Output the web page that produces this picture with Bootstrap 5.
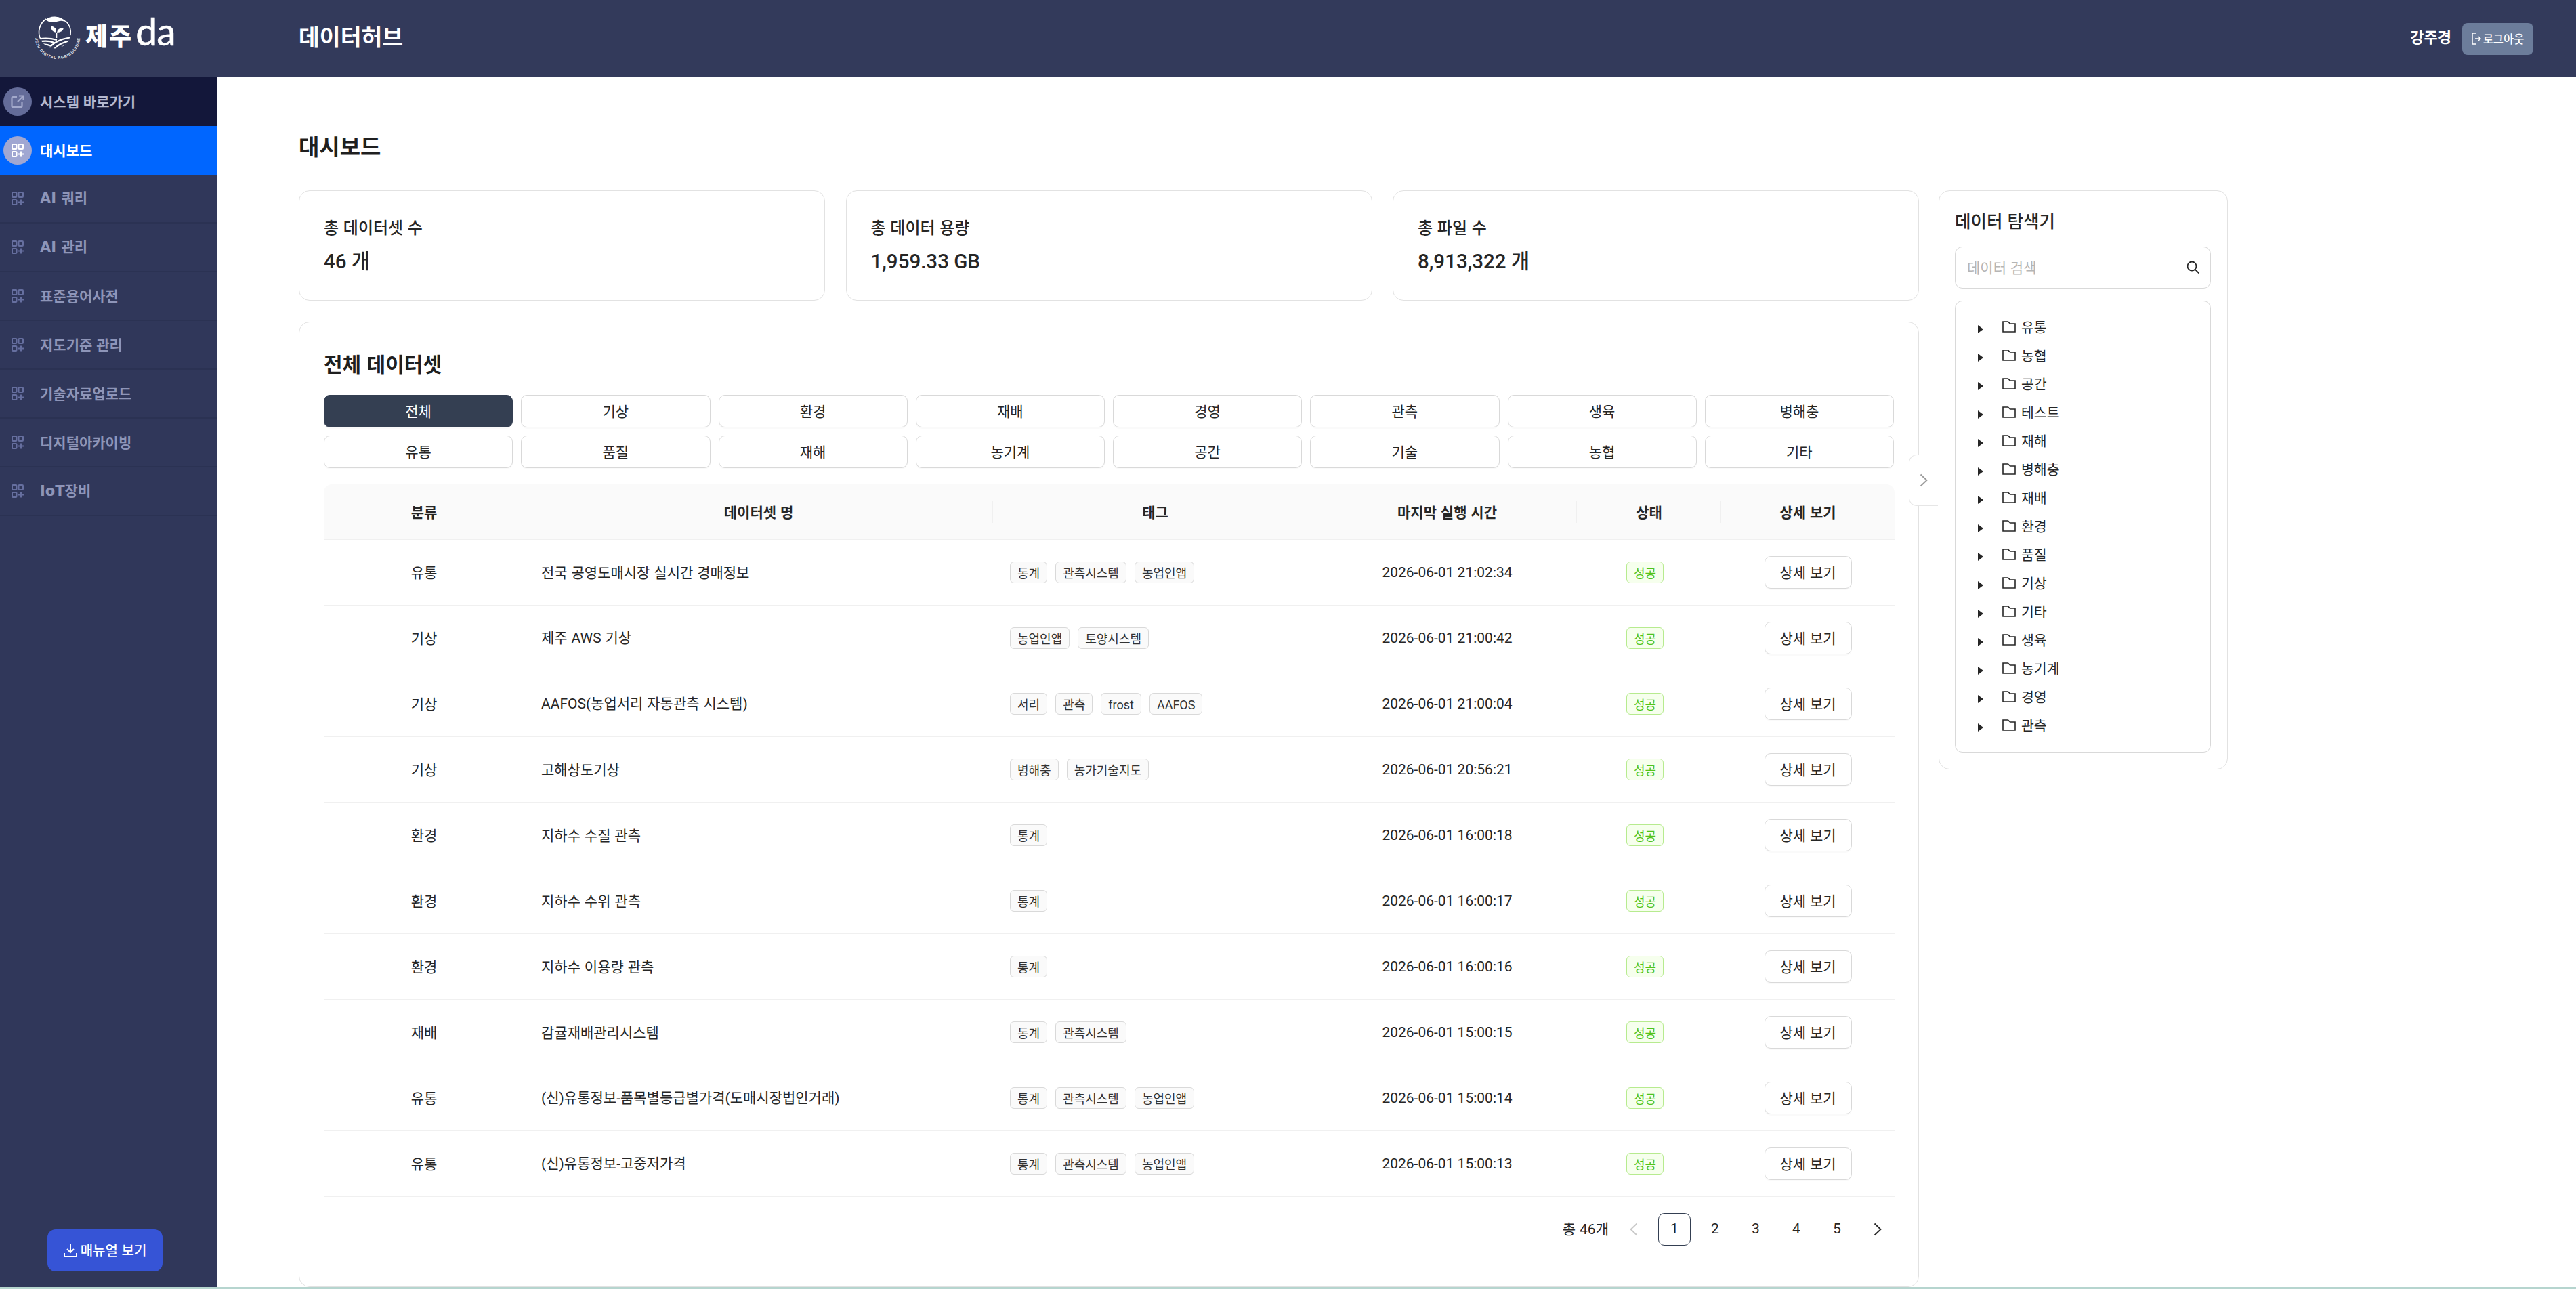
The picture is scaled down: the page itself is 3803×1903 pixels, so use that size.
<!DOCTYPE html>
<html lang="ko">
  <head>
    <meta charset="UTF-8" />
    <meta name="viewport" content="width=device-width, initial-scale=1.0" />
    <title>데이터허브</title>
    <link href="https://cdn.jsdelivr.net/npm/bootstrap@5.3.0/dist/css/bootstrap.min.css" rel="stylesheet" />
    <style>
      body {
        font-family: "Noto Sans CJK KR", "Noto Sans", sans-serif;
        font-size: 21px;
        color: #262626;
        background-color: #b6d5cf;
        overflow: hidden;
      }
      .lat { font-family: Roboto, sans-serif; }
      .lat-menu { font-family: "DejaVu Sans", sans-serif; }
      .app-shell { height: 1900px; background: #fff; overflow: hidden; }

      /* header */
      .top-bar { height: 114px; background: #333a5b; color: #fff; padding-right: 63px; }
      .brand-box { width: 441px; height: 114px; padding-left: 40px; margin: 0; }
      .brand-ko { font-size: 36px; font-weight: 900; letter-spacing: 2px; line-height: 1; margin-left: 6px; margin-top: -12px; }
      .brand-en { font-family: Lato, sans-serif; font-size: 57px; line-height: 1; letter-spacing: -1px; margin-left: 4px; margin-top: -24px; -webkit-text-stroke: 0.6px #fff; }
      .hub-title { font-size: 33.5px; font-weight: 700; margin-top: -8px; }
      .user-name { font-size: 22px; font-weight: 700; margin-right: 16px; margin-top: -7px; }
      .logout-btn { width: 105px; height: 47px; padding: 0; background: #6c7d9b; color: #fff; border: 0; border-radius: 8px; font-size: 16.5px; font-weight: 500; gap: 3px; }

      /* side menu */
      .side-menu { width: 320px; height: 1786px; background: #30375a; flex: 0 0 320px; }
      .menu-row { height: 72px; color: #8e95b8; font-weight: 700; border-bottom: 2px solid #2b3253; padding-left: 5px; text-decoration: none; }
      .menu-row.menu-sys { background: #13173a; color: #b4b8cf; border-bottom: 0; }
      .menu-row.menu-on { background: #0066ff; color: #fff; border-bottom: 0; }
      .menu-dot { width: 42px; height: 42px; border-radius: 50%; margin-right: 12px; flex: 0 0 42px; color: #666f9f; }
      .menu-sys .menu-dot { background: #646c99; color: #a3a9cb; }
      .menu-on .menu-dot { background: #a0a7d2; color: #fff; }
      .manual-btn { width: 170px; height: 62px; padding: 0; margin: auto 0 23px 70px; background: #3654d6; color: #fff; border: 0; border-radius: 12px; font-size: 20px; font-weight: 500; gap: 5px; }

      /* content */
      .main-pane { padding: 81px 0 0 121px; }
      .page-head { font-size: 33px; font-weight: 700; line-height: 40px; margin: 0 0 46px; color: #1f1f1f; }
      .left-col { width: 2392px; margin-right: 29px; }
      .box-line { border: 1px solid #e2e2e2; border-radius: 16px; background: #fff; }
      .stat-box { width: 777px; height: 163px; padding-left: 36px; }
      .stat-name { font-size: 24px; font-weight: 500; line-height: 30px; margin-bottom: 14px; }
      .stat-num { font-size: 29.5px; font-weight: 500; line-height: 38px; }
      .data-box { height: 1425px; margin-top: 31px; padding: 42px 36px 0; position: relative; }
      .data-title { font-size: 30px; font-weight: 700; line-height: 36px; margin: 0 0 29px; color: #1f1f1f; }
      .filter-grid { display: grid; grid-template-columns: repeat(8, 1fr); gap: 12px; margin-bottom: 24px; }
      .filter-btn { height: 48px; padding: 0; border: 1px solid #d9d9d9; border-radius: 9px; background: #fff; color: #262626; font-size: 21px; box-shadow: 0 2px 0 rgba(0, 0, 0, 0.02); }
      .filter-btn.filter-on { background: #343f52; border-color: #343f52; color: #fff; }

      /* table */
      .data-table { table-layout: fixed; width: 2319px; margin: 0; color: #262626; }
      .data-table th { height: 81px; padding: 0 25px; background: #fafafa; font-weight: 700; text-align: center; vertical-align: middle; border-bottom: 1px solid #f0f0f0; position: relative; }
      .data-table th:first-child { border-top-left-radius: 12px; }
      .data-table th:last-child { border-top-right-radius: 12px; }
      .data-table th:not(:last-child)::after { content: ""; position: absolute; right: 0; top: 24px; height: 33px; width: 1px; background: #f0f0f0; }
      .data-table td { height: 97px; padding: 0 25px; vertical-align: middle; border-bottom: 1px solid #f0f0f0; box-shadow: none; }
      .tag-list { gap: 12px; }
      .tag-chip { display: inline-block; height: 32px; line-height: 30px; padding: 0 10px; font-size: 18px; color: #333; background: #fafafa; border: 1px solid #d9d9d9; border-radius: 6px; white-space: nowrap; }
      .tag-ok { color: #52c41a; background: #f6ffed; border-color: #b7eb8f; margin: 0 12px 0 0; }
      .detail-btn { width: 129px; height: 48px; padding: 0; border: 1px solid #d9d9d9; border-radius: 9px; background: #fff; color: #262626; font-size: 21px; box-shadow: 0 2px 0 rgba(0, 0, 0, 0.02); }

      /* pagination */
      .pager-row { margin-top: 24px; gap: 12px; }
      .pager-total { margin-right: 1px; }
      .pager-item { width: 48px; height: 48px; padding-top: 1px; border-radius: 9px; border: 1px solid transparent; color: #262626; text-decoration: none; }
      .pager-item.pager-on { border-color: #343f52; }
      .pager-item.pager-off { color: #c9c9c9; }

      /* collapse handle over the card edge */
      .side-toggle { position: absolute; right: -29px; top: 195px; width: 43px; height: 76px; padding: 0; background: #fff; color: #9a9a9a; border: 1px solid #e6e6e6; border-right: 0; border-radius: 12px 0 0 12px; }

      /* explorer */
      .explorer-box { width: 427px; height: 855px; padding: 27px 24px 0 23px; }
      .explorer-title { font-size: 25.5px; font-weight: 500; line-height: 32px; margin: 0 0 23px; }
      .search-wrap { height: 62px; padding: 0 15px 0 17px; border-radius: 11px; border: 1px solid #d9d9d9; }
      .search-input { border: 0; outline: 0; padding: 0; width: 100%; font-size: 21px; color: #262626; background: transparent; }
      .search-input::placeholder { color: #b5b5b5; }
      .tree-wrap { margin-top: 18px; padding: 16px 0 19px 33px; border: 1px solid #d9d9d9; border-radius: 11px; }
      .tree-row { height: 42px; font-size: 20.5px; }
      .tree-caret { width: 8px; height: 12px; margin: 8px 28px 0 0; }
      .tree-folder { width: 20px; height: 17px; margin-right: 8px; }
    </style>
  </head>
  <body>
    <svg width="0" height="0" class="d-block">
      <symbol id="i-grid" viewBox="0 0 18 20">
        <g fill="none" stroke="currentColor" stroke-width="2">
          <rect x="1" y="1" width="6.5" height="7" rx="1" />
          <rect x="10.5" y="1" width="6.5" height="7" rx="1" />
          <rect x="1" y="12" width="6.5" height="7" rx="1" />
          <path d="M10 15.5h8M14 11.5v8" />
        </g>
      </symbol>
      <symbol id="i-folder" viewBox="0 0 20 17">
        <path d="M1 1h7.5l3 3H19v12H1z" fill="none" stroke="currentColor" stroke-width="1.6" />
      </symbol>
      <symbol id="i-caret" viewBox="0 0 8 12"><path d="M0 0l8 6-8 6z" fill="currentColor" /></symbol>
      <symbol id="i-next" viewBox="0 0 12 20"><path d="M1.5 1.5L10.5 10l-9 8.5" fill="none" stroke="currentColor" stroke-width="1.8" /></symbol>
      <symbol id="i-prev" viewBox="0 0 12 20"><path d="M10.5 1.5L1.5 10l9 8.5" fill="none" stroke="currentColor" stroke-width="1.8" /></symbol>
    </svg>

    <div class="app-shell">
      <header class="top-bar d-flex align-items-center">
        <div class="brand-box d-flex align-items-center">
          <svg width="80" height="80" viewBox="0 0 80 80" fill="none" class="flex-shrink-0" style="margin-top:-4px">
            <defs>
              <clipPath id="logo-clip"><circle cx="41" cy="33" r="23.5" /></clipPath>
              <path id="logo-ring" d="M12 41A33 31 0 0 0 78 41" />
            </defs>
            <path d="M20 43A23.5 23.5 0 0 1 28 13M58 17A23.5 23.5 0 0 1 64 37" stroke="#fff" stroke-width="1.6" />
            <path d="M27 14Q34 9 41 9.5Q52 10 60 19Q54 15 48 16Q42 17.500 38 17.500Q32 18 27 14Z" fill="#fff" />
            <g stroke="#fff" stroke-width="1.6">
              <path d="M43.500 41V33" />
            </g>
            <path d="M43 33Q35 32 35 23Q44 25 43 33ZM44 33Q45 26 54 26Q53 33 44 33Z" fill="#fff" />
            <g clip-path="url(#logo-clip)" stroke="#fff" stroke-width="2.200">
              <path d="M15 43Q30 40 44 44M16 47Q30 44 40 48M18 51Q28 49 36 53M30 60Q38 44 66 40M37 61Q45 48 66 45M44 61Q52 52 65 49" />
            </g>
            <text font-family="Liberation Sans, sans-serif" font-size="5.600" font-weight="700" fill="#e8eaf2">
              <textPath href="#logo-ring" textLength="100">JEJU DIGITAL AGRICULTURE</textPath>
            </text>
          </svg>
          <span class="brand-ko">제주</span>
          <span class="brand-en">da</span>
        </div>
        <div class="hub-title">데이터허브</div>
        <div class="ms-auto d-flex align-items-center">
          <span class="user-name">강주경</span>
          <button class="btn logout-btn d-flex align-items-center justify-content-center" type="button">
            <svg width="14" height="20" viewBox="0 0 14 20" fill="none" stroke="currentColor" stroke-width="1.500">
              <path d="M6 2H1v16h5M5 10h8M10 7l3 3-3 3" />
            </svg>
            로그아웃
          </button>
        </div>
      </header>

      <div class="d-flex">
        <aside class="side-menu d-flex flex-column">
          <a class="menu-row menu-sys d-flex align-items-center" href="#">
            <span class="menu-dot d-flex align-items-center justify-content-center">
              <svg width="20" height="20" viewBox="0 0 20 20" fill="none" stroke="currentColor" stroke-width="2.200">
                <path d="M9 3H3a1.500 1.500 0 0 0-1.500 1.500v12A1.500 1.500 0 0 0 3 18h12a1.500 1.500 0 0 0 1.500-1.500V11M12 1.500h6.500V8M18 2l-8 8" />
              </svg>
            </span>
            시스템 바로가기
          </a>
          <a class="menu-row menu-on d-flex align-items-center" href="#">
            <span class="menu-dot d-flex align-items-center justify-content-center"><svg width="18" height="20"><use href="#i-grid" /></svg></span>
            대시보드
          </a>
          <a class="menu-row d-flex align-items-center" href="#"><span class="menu-dot d-flex align-items-center justify-content-center"><svg width="18" height="20"><use href="#i-grid" /></svg></span><span><span class="lat-menu">AI </span>쿼리</span></a>
          <a class="menu-row d-flex align-items-center" href="#"><span class="menu-dot d-flex align-items-center justify-content-center"><svg width="18" height="20"><use href="#i-grid" /></svg></span><span><span class="lat-menu">AI </span>관리</span></a>
          <a class="menu-row d-flex align-items-center" href="#"><span class="menu-dot d-flex align-items-center justify-content-center"><svg width="18" height="20"><use href="#i-grid" /></svg></span>표준용어사전</a>
          <a class="menu-row d-flex align-items-center" href="#"><span class="menu-dot d-flex align-items-center justify-content-center"><svg width="18" height="20"><use href="#i-grid" /></svg></span>지도기준 관리</a>
          <a class="menu-row d-flex align-items-center" href="#"><span class="menu-dot d-flex align-items-center justify-content-center"><svg width="18" height="20"><use href="#i-grid" /></svg></span>기술자료업로드</a>
          <a class="menu-row d-flex align-items-center" href="#"><span class="menu-dot d-flex align-items-center justify-content-center"><svg width="18" height="20"><use href="#i-grid" /></svg></span>디지털아카이빙</a>
          <a class="menu-row d-flex align-items-center" href="#"><span class="menu-dot d-flex align-items-center justify-content-center"><svg width="18" height="20"><use href="#i-grid" /></svg></span><span><span class="lat-menu">IoT</span>장비</span></a>
          <button class="btn manual-btn d-flex align-items-center justify-content-center" type="button">
            <svg width="20" height="22" viewBox="0 0 20 22" fill="none" stroke="currentColor" stroke-width="2">
              <path d="M10 1v13M5 9l5 5 5-5M1 15v5h18v-5" />
            </svg>
            매뉴얼 보기
          </button>
        </aside>

        <main class="main-pane flex-grow-1">
          <h1 class="page-head">대시보드</h1>
          <div class="d-flex align-items-start">
            <div class="left-col">
              <div class="d-flex justify-content-between">
                <div class="stat-box box-line d-flex flex-column justify-content-center">
                  <div class="stat-name">총 데이터셋 수</div>
                  <div class="stat-num"><span class="lat">46 </span>개</div>
                </div>
                <div class="stat-box box-line d-flex flex-column justify-content-center">
                  <div class="stat-name">총 데이터 용량</div>
                  <div class="stat-num"><span class="lat">1,959.33 GB</span></div>
                </div>
                <div class="stat-box box-line d-flex flex-column justify-content-center">
                  <div class="stat-name">총 파일 수</div>
                  <div class="stat-num"><span class="lat">8,913,322 </span>개</div>
                </div>
              </div>

              <section class="data-box box-line">
                <h2 class="data-title">전체 데이터셋</h2>
                <div class="filter-grid">
                  <button class="btn filter-btn filter-on" type="button">전체</button>
                  <button class="btn filter-btn" type="button">기상</button>
                  <button class="btn filter-btn" type="button">환경</button>
                  <button class="btn filter-btn" type="button">재배</button>
                  <button class="btn filter-btn" type="button">경영</button>
                  <button class="btn filter-btn" type="button">관측</button>
                  <button class="btn filter-btn" type="button">생육</button>
                  <button class="btn filter-btn" type="button">병해충</button>
                  <button class="btn filter-btn" type="button">유통</button>
                  <button class="btn filter-btn" type="button">품질</button>
                  <button class="btn filter-btn" type="button">재해</button>
                  <button class="btn filter-btn" type="button">농기계</button>
                  <button class="btn filter-btn" type="button">공간</button>
                  <button class="btn filter-btn" type="button">기술</button>
                  <button class="btn filter-btn" type="button">농협</button>
                  <button class="btn filter-btn" type="button">기타</button>
                </div>

                <table class="table data-table">
                  <colgroup>
                    <col style="width:296px" />
                    <col style="width:692px" />
                    <col style="width:479px" />
                    <col style="width:383px" />
                    <col style="width:213px" />
                    <col style="width:256px" />
                  </colgroup>
                  <thead>
                    <tr><th>분류</th><th>데이터셋 명</th><th>태그</th><th>마지막 실행 시간</th><th>상태</th><th>상세 보기</th></tr>
                  </thead>
                  <tbody>
                    <tr>
                      <td class="text-center">유통</td>
                      <td>전국 공영도매시장 실시간 경매정보</td>
                      <td><div class="d-flex tag-list"><span class="tag-chip">통계</span><span class="tag-chip">관측시스템</span><span class="tag-chip">농업인앱</span></div></td>
                      <td class="text-center"><span class="lat">2026-06-01 21:02:34</span></td>
                      <td class="text-center"><span class="tag-chip tag-ok">성공</span></td>
                      <td class="text-center"><button class="btn detail-btn" type="button">상세 보기</button></td>
                    </tr>
                    <tr>
                      <td class="text-center">기상</td>
                      <td>제주 <span class="lat">AWS</span> 기상</td>
                      <td><div class="d-flex tag-list"><span class="tag-chip">농업인앱</span><span class="tag-chip">토양시스템</span></div></td>
                      <td class="text-center"><span class="lat">2026-06-01 21:00:42</span></td>
                      <td class="text-center"><span class="tag-chip tag-ok">성공</span></td>
                      <td class="text-center"><button class="btn detail-btn" type="button">상세 보기</button></td>
                    </tr>
                    <tr>
                      <td class="text-center">기상</td>
                      <td><span class="lat">AAFOS(</span>농업서리 자동관측 시스템<span class="lat">)</span></td>
                      <td><div class="d-flex tag-list"><span class="tag-chip">서리</span><span class="tag-chip">관측</span><span class="tag-chip"><span class="lat">frost</span></span><span class="tag-chip"><span class="lat">AAFOS</span></span></div></td>
                      <td class="text-center"><span class="lat">2026-06-01 21:00:04</span></td>
                      <td class="text-center"><span class="tag-chip tag-ok">성공</span></td>
                      <td class="text-center"><button class="btn detail-btn" type="button">상세 보기</button></td>
                    </tr>
                    <tr>
                      <td class="text-center">기상</td>
                      <td>고해상도기상</td>
                      <td><div class="d-flex tag-list"><span class="tag-chip">병해충</span><span class="tag-chip">농가기술지도</span></div></td>
                      <td class="text-center"><span class="lat">2026-06-01 20:56:21</span></td>
                      <td class="text-center"><span class="tag-chip tag-ok">성공</span></td>
                      <td class="text-center"><button class="btn detail-btn" type="button">상세 보기</button></td>
                    </tr>
                    <tr>
                      <td class="text-center">환경</td>
                      <td>지하수 수질 관측</td>
                      <td><div class="d-flex tag-list"><span class="tag-chip">통계</span></div></td>
                      <td class="text-center"><span class="lat">2026-06-01 16:00:18</span></td>
                      <td class="text-center"><span class="tag-chip tag-ok">성공</span></td>
                      <td class="text-center"><button class="btn detail-btn" type="button">상세 보기</button></td>
                    </tr>
                    <tr>
                      <td class="text-center">환경</td>
                      <td>지하수 수위 관측</td>
                      <td><div class="d-flex tag-list"><span class="tag-chip">통계</span></div></td>
                      <td class="text-center"><span class="lat">2026-06-01 16:00:17</span></td>
                      <td class="text-center"><span class="tag-chip tag-ok">성공</span></td>
                      <td class="text-center"><button class="btn detail-btn" type="button">상세 보기</button></td>
                    </tr>
                    <tr>
                      <td class="text-center">환경</td>
                      <td>지하수 이용량 관측</td>
                      <td><div class="d-flex tag-list"><span class="tag-chip">통계</span></div></td>
                      <td class="text-center"><span class="lat">2026-06-01 16:00:16</span></td>
                      <td class="text-center"><span class="tag-chip tag-ok">성공</span></td>
                      <td class="text-center"><button class="btn detail-btn" type="button">상세 보기</button></td>
                    </tr>
                    <tr>
                      <td class="text-center">재배</td>
                      <td>감귤재배관리시스템</td>
                      <td><div class="d-flex tag-list"><span class="tag-chip">통계</span><span class="tag-chip">관측시스템</span></div></td>
                      <td class="text-center"><span class="lat">2026-06-01 15:00:15</span></td>
                      <td class="text-center"><span class="tag-chip tag-ok">성공</span></td>
                      <td class="text-center"><button class="btn detail-btn" type="button">상세 보기</button></td>
                    </tr>
                    <tr>
                      <td class="text-center">유통</td>
                      <td><span class="lat">(</span>신<span class="lat">)</span>유통정보<span class="lat">-</span>품목별등급별가격<span class="lat">(</span>도매시장법인거래<span class="lat">)</span></td>
                      <td><div class="d-flex tag-list"><span class="tag-chip">통계</span><span class="tag-chip">관측시스템</span><span class="tag-chip">농업인앱</span></div></td>
                      <td class="text-center"><span class="lat">2026-06-01 15:00:14</span></td>
                      <td class="text-center"><span class="tag-chip tag-ok">성공</span></td>
                      <td class="text-center"><button class="btn detail-btn" type="button">상세 보기</button></td>
                    </tr>
                    <tr>
                      <td class="text-center">유통</td>
                      <td><span class="lat">(</span>신<span class="lat">)</span>유통정보<span class="lat">-</span>고중저가격</td>
                      <td><div class="d-flex tag-list"><span class="tag-chip">통계</span><span class="tag-chip">관측시스템</span><span class="tag-chip">농업인앱</span></div></td>
                      <td class="text-center"><span class="lat">2026-06-01 15:00:13</span></td>
                      <td class="text-center"><span class="tag-chip tag-ok">성공</span></td>
                      <td class="text-center"><button class="btn detail-btn" type="button">상세 보기</button></td>
                    </tr>
                  </tbody>
                </table>

                <div class="pager-row d-flex justify-content-end align-items-center">
                  <span class="pager-total">총 <span class="lat">46</span>개</span>
                  <a class="pager-item pager-off d-flex align-items-center justify-content-center" href="#"><svg width="12" height="20"><use href="#i-prev" /></svg></a>
                  <a class="pager-item pager-on lat d-flex align-items-center justify-content-center" href="#">1</a>
                  <a class="pager-item lat d-flex align-items-center justify-content-center" href="#">2</a>
                  <a class="pager-item lat d-flex align-items-center justify-content-center" href="#">3</a>
                  <a class="pager-item lat d-flex align-items-center justify-content-center" href="#">4</a>
                  <a class="pager-item lat d-flex align-items-center justify-content-center" href="#">5</a>
                  <a class="pager-item d-flex align-items-center justify-content-center" href="#"><svg width="12" height="20"><use href="#i-next" /></svg></a>
                </div>

                <button class="side-toggle d-flex align-items-center justify-content-center" type="button"><svg width="12" height="20"><use href="#i-next" /></svg></button>
              </section>
            </div>

            <aside class="explorer-box box-line">
              <h3 class="explorer-title">데이터 탐색기</h3>
              <div class="search-wrap d-flex align-items-center">
                <input class="search-input" type="text" placeholder="데이터 검색" />
                <svg width="20" height="20" viewBox="0 0 20 20" fill="none" stroke="#262626" stroke-width="1.800" class="flex-shrink-0">
                  <circle cx="8" cy="8" r="6.500" /><path d="M12.800 12.800L18.500 18.500" />
                </svg>
              </div>
              <div class="tree-wrap">
                <div class="tree-row d-flex align-items-center"><svg class="tree-caret"><use href="#i-caret" /></svg><svg class="tree-folder"><use href="#i-folder" /></svg>유통</div>
                <div class="tree-row d-flex align-items-center"><svg class="tree-caret"><use href="#i-caret" /></svg><svg class="tree-folder"><use href="#i-folder" /></svg>농협</div>
                <div class="tree-row d-flex align-items-center"><svg class="tree-caret"><use href="#i-caret" /></svg><svg class="tree-folder"><use href="#i-folder" /></svg>공간</div>
                <div class="tree-row d-flex align-items-center"><svg class="tree-caret"><use href="#i-caret" /></svg><svg class="tree-folder"><use href="#i-folder" /></svg>테스트</div>
                <div class="tree-row d-flex align-items-center"><svg class="tree-caret"><use href="#i-caret" /></svg><svg class="tree-folder"><use href="#i-folder" /></svg>재해</div>
                <div class="tree-row d-flex align-items-center"><svg class="tree-caret"><use href="#i-caret" /></svg><svg class="tree-folder"><use href="#i-folder" /></svg>병해충</div>
                <div class="tree-row d-flex align-items-center"><svg class="tree-caret"><use href="#i-caret" /></svg><svg class="tree-folder"><use href="#i-folder" /></svg>재배</div>
                <div class="tree-row d-flex align-items-center"><svg class="tree-caret"><use href="#i-caret" /></svg><svg class="tree-folder"><use href="#i-folder" /></svg>환경</div>
                <div class="tree-row d-flex align-items-center"><svg class="tree-caret"><use href="#i-caret" /></svg><svg class="tree-folder"><use href="#i-folder" /></svg>품질</div>
                <div class="tree-row d-flex align-items-center"><svg class="tree-caret"><use href="#i-caret" /></svg><svg class="tree-folder"><use href="#i-folder" /></svg>기상</div>
                <div class="tree-row d-flex align-items-center"><svg class="tree-caret"><use href="#i-caret" /></svg><svg class="tree-folder"><use href="#i-folder" /></svg>기타</div>
                <div class="tree-row d-flex align-items-center"><svg class="tree-caret"><use href="#i-caret" /></svg><svg class="tree-folder"><use href="#i-folder" /></svg>생육</div>
                <div class="tree-row d-flex align-items-center"><svg class="tree-caret"><use href="#i-caret" /></svg><svg class="tree-folder"><use href="#i-folder" /></svg>농기계</div>
                <div class="tree-row d-flex align-items-center"><svg class="tree-caret"><use href="#i-caret" /></svg><svg class="tree-folder"><use href="#i-folder" /></svg>경영</div>
                <div class="tree-row d-flex align-items-center"><svg class="tree-caret"><use href="#i-caret" /></svg><svg class="tree-folder"><use href="#i-folder" /></svg>관측</div>
              </div>
            </aside>
          </div>
        </main>
      </div>
    </div>

    <script src="https://cdn.jsdelivr.net/npm/bootstrap@5.3.0/dist/js/bootstrap.bundle.min.js"></script>
  </body>
</html>
